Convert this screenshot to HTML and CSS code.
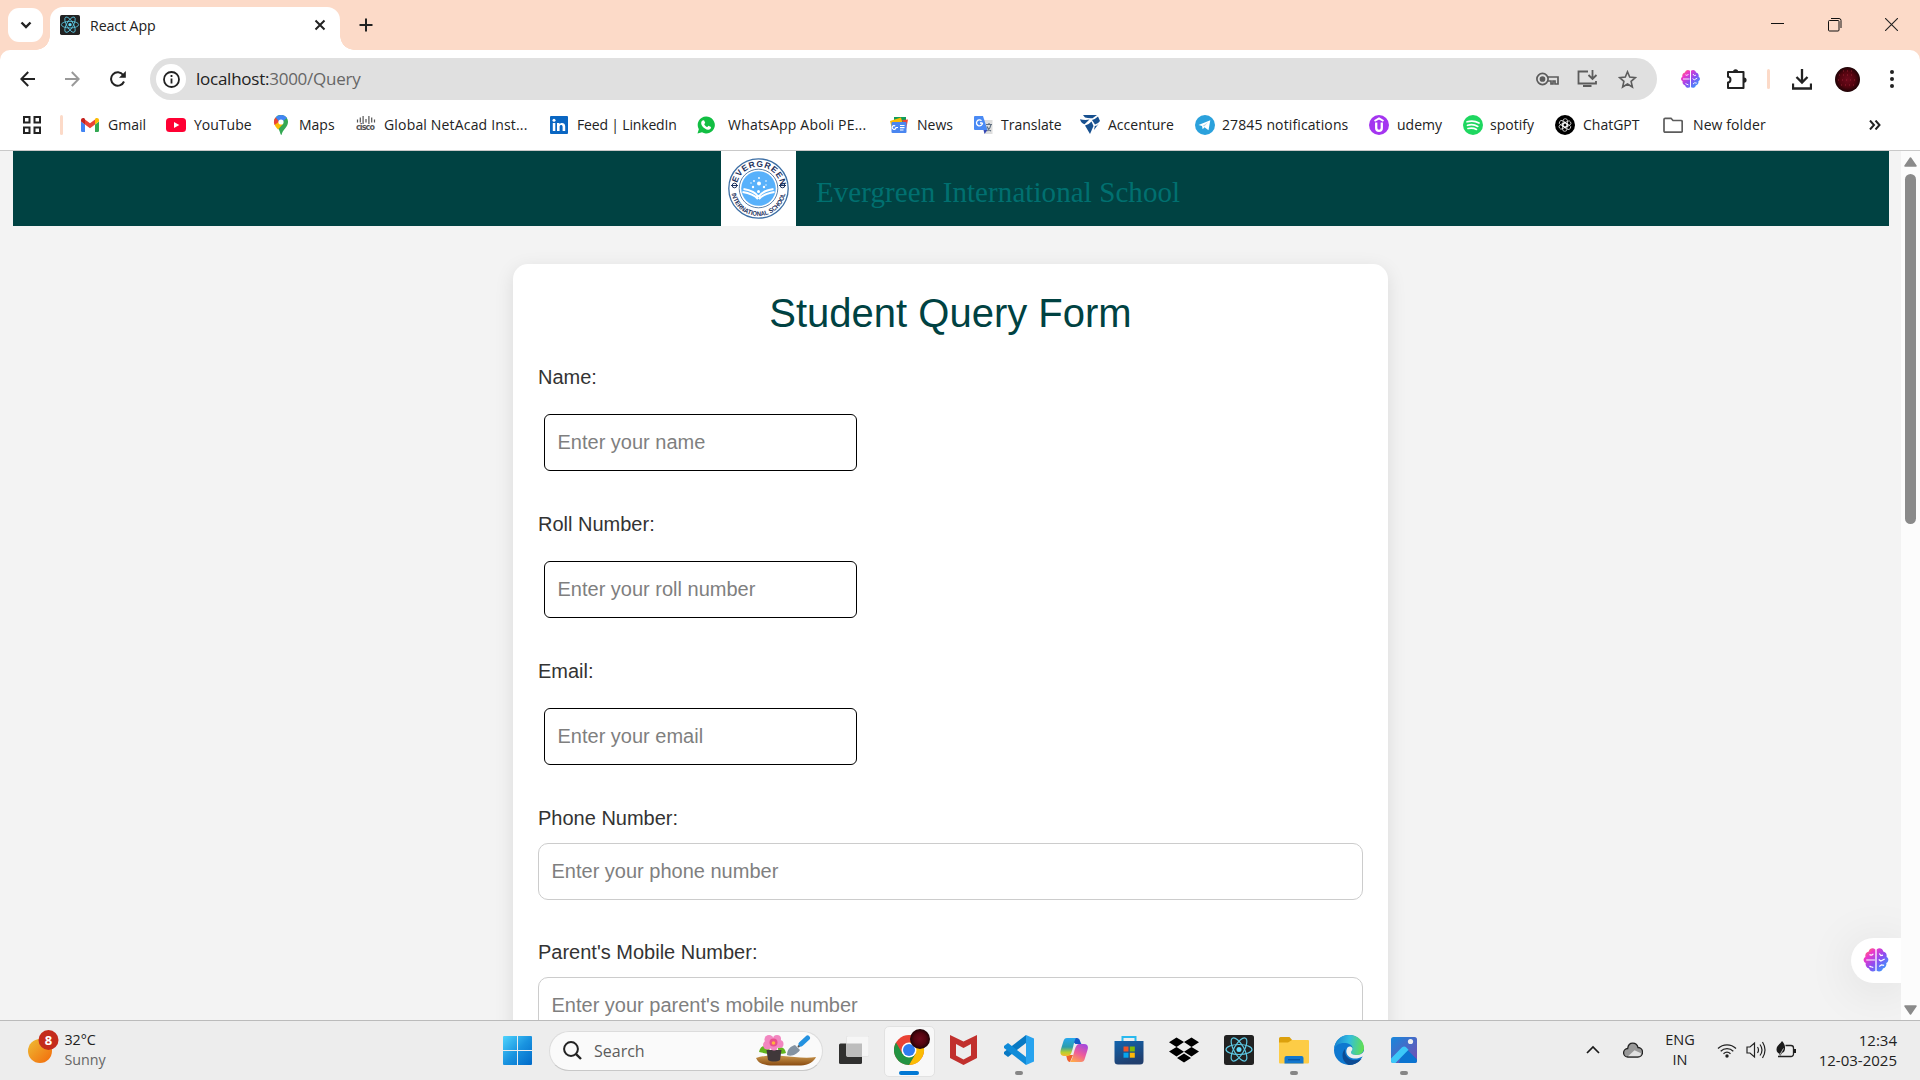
FILE: index.html
```
<!DOCTYPE html>
<html lang="en">
<head>
<meta charset="utf-8">
<title>React App</title>
<link rel="stylesheet" href="styles.css">
</head>
<body>
<svg class="defs" width="0" height="0" aria-hidden="true">
  <defs>
    <linearGradient id="brainGrad" x1="0" y1="0" x2="1" y2="1"><stop offset="0" stop-color="#ff9a2e"/><stop offset=".25" stop-color="#f037c8"/><stop offset=".55" stop-color="#8a4df2"/><stop offset="1" stop-color="#22b2ff"/></linearGradient>
    <linearGradient id="winGrad" x1="0" y1="0" x2="1" y2="1"><stop offset="0" stop-color="#4fd4fd"/><stop offset=".5" stop-color="#1a94e0"/><stop offset="1" stop-color="#0069c8"/></linearGradient>
    <radialGradient id="redBall"><stop offset="0" stop-color="#6d0a1c"/><stop offset=".6" stop-color="#54040f"/><stop offset="1" stop-color="#1e0306"/></radialGradient>
    <symbol id="react" viewBox="0 0 30 30"><rect width="30" height="30" rx="2.5" fill="#222"/><g fill="none" stroke="#5ecbe6" stroke-width="1.2"><ellipse cx="15" cy="14.5" rx="13" ry="5"/><ellipse cx="15" cy="14.5" rx="13" ry="5" transform="rotate(60 15 14.5)"/><ellipse cx="15" cy="14.5" rx="13" ry="5" transform="rotate(120 15 14.5)"/></g><circle cx="15" cy="14.5" r="2.5" fill="#61dafb"/></symbol>
    <symbol id="brain" viewBox="0 0 24 24"><path fill="url(#brainGrad)" d="M11.4 2.2V22c-2.600 1.300-5.200.2-5.800-2.200C3 19.200 2 17 2.500 14.800 0 13.600 0 10.400 2.200 9.300 1.700 6.500 3 4.500 5.300 4.100 6 1.400 9 .3 11.400 2.200zM12.600 2.200V22c2.600 1.300 5.200.2 5.800-2.200 2.600-.6 3.600-2.800 3.100-5 2.500-1.200 2.500-4.400.3-5.500.5-2.800-.8-4.800-3.100-5.200-.7-2.700-3.700-3.800-6.100-1.900z"/><path fill="none" stroke="#fff" stroke-width="1.100" d="M3 12h8M6 7c1 .8 2.500.8 3.500-.8M6 17.500c1 1 2.500.8 3.500 1.500M15 6l1.500 2 2-.5M14.500 11.500l2 1.500 3.500-2M15 18l2-1.500 2.500.5"/></symbol>
  </defs>
</svg>

<header class="tabstrip">
  <button class="tab-search" aria-label="Search tabs"><svg width="12" height="8" viewBox="0 0 12 8"><path d="M1.500 1.500 6 6l4.500-4.500" fill="none" stroke="#222" stroke-width="2.400"/></svg></button>
  <div class="tab">
    <svg width="20" height="20"><use href="#react"/></svg>
    <span class="tab-title">React App</span>
    <svg width="12" height="12" viewBox="0 0 12 12"><path d="M1.500 1.500l9 9m0-9l-9 9" stroke="#222" stroke-width="2"/></svg>
  </div>
  <svg class="new-tab" width="14" height="14" viewBox="0 0 14 14"><path d="M7 .5v13M.5 7h13" stroke="#222" stroke-width="2"/></svg>
  <div class="window-buttons">
    <svg width="13" height="13" viewBox="0 0 13 13"><path d="M0 5.500h13" stroke="#111"/></svg>
    <svg width="14" height="14" viewBox="0 0 14 14"><rect x=".5" y="2.500" width="10.500" height="10.500" rx="1" fill="none" stroke="#111"/><path d="M3 .5h8a2 2 0 0 1 2 2V10" fill="none" stroke="#111"/></svg>
    <svg width="13" height="13" viewBox="0 0 13 13"><path d="M0 0l13 13M13 0L0 13" stroke="#222" stroke-width="1.100"/></svg>
  </div>
</header>

<nav class="toolbar">
  <svg width="15" height="16" viewBox="0 0 15 16"><path d="M15 8H1.500M8.200 1L1.300 8l6.900 7" fill="none" stroke="#222" stroke-width="2"/></svg>
  <svg width="15" height="16" viewBox="0 0 15 16"><path d="M0 8h13.500M6.800 1l6.900 7-6.900 7" fill="none" stroke="#999" stroke-width="2"/></svg>
  <svg width="16" height="16" viewBox="0 0 16 16"><path d="M14 10.500A6.700 6.700 0 1 1 13.200 4L14.500 5.500" fill="none" stroke="#222" stroke-width="2"/><path d="M15.800 0v6.800H9z" fill="#222"/></svg>
  <div class="omnibox">
    <span class="site-info"><svg width="17" height="17" viewBox="0 0 17 17"><circle cx="8.500" cy="8.500" r="7.500" fill="none" stroke="#222" stroke-width="1.800"/><path d="M8.500 7.500v5M8.500 4v2" stroke="#222" stroke-width="1.800"/></svg></span>
    <span class="url">localhost:<i>3000/Query</i></span>
    <div class="omni-icons">
      <svg class="key" width="23" height="14" viewBox="0 0 23 14" fill="none" stroke="#5c5c5c" stroke-width="1.700"><circle cx="6.500" cy="7" r="5.600"/><circle cx="6.500" cy="7" r="2" fill="#5c5c5c"/><path d="M11.500 5H22v7h-3V9h-2v3h-2V9h-3.500"/></svg>
      <svg width="21" height="18" viewBox="0 0 21 18" fill="none" stroke="#5c5c5c" stroke-width="1.800"><path d="M11 1.500H1.500v12h17.500V11M6 16h8.500M15.500 0v8.500M11.500 5l4 4 4-4"/></svg>
      <svg width="19" height="19" viewBox="0 0 19 19"><path d="M9.500 1.800l2.200 5.300 5.700.5-4.300 3.800 1.300 5.600-4.900-3-4.900 3 1.300-5.600L1.600 7.600l5.700-.5z" fill="none" stroke="#5c5c5c" stroke-width="1.600"/></svg>
    </div>
  </div>
  <svg width="21" height="20"><use href="#brain"/></svg>
  <svg width="21" height="21" viewBox="0 0 21 21"><path d="M2 3h15.500v16H2v-5.500c3.300-.5 3.300-5.200 0-5.700z" fill="none" stroke="#222" stroke-width="2" stroke-linejoin="round"/><path d="M7 2.800a2.600 2.600 0 0 1 5.200 0zM18 8.500a2.600 2.600 0 0 1 0 5.200z" fill="#222"/></svg>
  <span class="divider"></span>
  <svg width="20" height="21" viewBox="0 0 20 21"><path d="M1 14.500v5h18v-5M10 0v13M4.500 8l5.500 5.500L15.500 8" fill="none" stroke="#222" stroke-width="2.300"/></svg>
  <svg width="25" height="25" viewBox="0 0 25 25"><circle cx="12.500" cy="12.500" r="12.500" fill="url(#redBall)"/><path d="M4 8h16M3 13h19M6 18h14M8 4h9" stroke="#a8263a" stroke-width=".8" stroke-dasharray="1 3"/></svg>
  <svg width="4" height="18" viewBox="0 0 4 18" fill="#222"><circle cx="2" cy="2" r="2"/><circle cx="2" cy="9" r="2"/><circle cx="2" cy="16" r="2"/></svg>
</nav>

<nav class="bookmarks">
  <svg width="18" height="18" viewBox="0 0 18 18" fill="none" stroke="#222" stroke-width="2"><path d="M1 1h5.500v5.500H1zM11.500 1H17v5.500h-5.500zM1 11.500h5.500V17H1zM11.500 11.500H17V17h-5.500z"/></svg>
  <span class="divider"></span>
  <a class="bm"><svg width="20" height="20" viewBox="0 0 20 20"><path fill="#4285f4" d="M1 6.500l4 3V17H2.200A1.200 1.200 0 0 1 1 15.800z"/><path fill="#34a853" d="M15 9.500l4-3v9.300a1.200 1.200 0 0 1-1.200 1.200H15z"/><path fill="#ea4335" d="M5 4.500l5 3.800 5-3.800v5L10 13.300 5 9.500z"/><path fill="#c5221f" d="M1 5c0-2 2-2.600 3.300-1.700L5 4v5.500l-4-3z"/><path fill="#fbbc04" d="M19 5c0-2-2-2.600-3.300-1.700L15 4v5.500l4-3z"/></svg>Gmail</a>
  <a class="bm"><svg width="20" height="20" viewBox="0 0 20 20"><rect y="3" width="20" height="14" rx="3.500" fill="#ff0033"/><path fill="#fff" d="M8 7l5.300 3L8 13z"/></svg>YouTube</a>
  <a class="bm"><svg width="20" height="20" viewBox="0 0 20 20"><path fill="#34a853" d="M3 7a7 7 0 1 1 13.800 1.500C16 13 12 14 10.500 20 9 20 9.500 16 6.500 12.800z"/><path fill="#fbbc04" d="M3.500 9L8 4l4 5-5 5.500C5 12.500 4 11 3.500 9z"/><path fill="#ea4335" d="M4.500 2.500L9 6l-5.500 4C2.300 7 3 4.500 4.500 2.500z"/><path fill="#4285f4" d="M4.700 2.500C8-1 13.500-.6 16 3L9.500 8z"/><circle cx="10" cy="7" r="2.600" fill="#fff"/></svg>Maps</a>
  <a class="bm netacad"><svg width="20" height="20" viewBox="0 0 20 20"><path d="M1.500 4.500v3M4.300 2.500v5M7.100 1v8M10 4v3.500M12.900 1v8M15.700 2.500v5M18.500 4.500v3" stroke="#555" stroke-width="1.200"/><text x="0" y="15" class="cisco">cisco</text></svg>Global NetAcad Inst...</a>
  <a class="bm linkedin"><svg width="20" height="20" viewBox="0 0 20 20"><rect x="1" y="1" width="18" height="18" rx="1" fill="#0a66c2"/><path fill="#fff" d="M3.800 8h2.500v8H3.800zM8 8h2.500v1.200c1.500-2.200 5.700-1.700 5.700 2V16h-2.600v-4.300c0-2.500-3-2.300-3 0V16H8z"/><circle cx="5" cy="5.200" r="1.500" fill="#fff"/></svg>Feed | LinkedIn</a>
  <a class="bm whatsapp"><svg width="20" height="20" viewBox="0 0 20 20"><path fill="#12be43" d="M10 1.500a8.500 8.500 0 1 1-4 15.800L1.500 18.500 2.800 14.200A8.500 8.500 0 0 1 10 1.500z"/><path fill="#fff" d="M6.500 5.500l1.500-.2 1.200 2.500-1 1.400c.7 1.400 1.700 2.300 3.100 2.900l1.200-1.300 2.500 1.200c.1 2-1.500 2.900-3 2.700C8.200 14 5.300 11 5.200 8.200c0-1.200.5-2.200 1.300-2.700z"/></svg>WhatsApp Aboli PE...</a>
  <a class="bm"><svg width="20" height="20" viewBox="0 0 20 20"><path fill="#0f9d58" d="M5 2h12v7H5z"/><path fill="#ea4335" d="M13 5l6-.5-2 10z"/><path fill="#fbbc04" d="M1 6l11-3.500L14 10 3 14z"/><rect x="2.500" y="7" width="15" height="11" rx="1" fill="#4a86f0"/><path d="M9 12.500H7a1.900 1.900 0 1 1-.8-1.600M11 10.500h4.500M11 12.700h4.500M11 15h3.500" fill="none" stroke="#fff" stroke-width="1.200"/></svg>News</a>
  <a class="bm"><svg width="20" height="20" viewBox="0 0 20 20"><path fill="#dedede" d="M8 5h11.500v14H12z"/><path fill="#4a8af4" d="M2 1h8l4.500 14H2a1 1 0 0 1-1-1V2a1 1 0 0 1 1-1z"/><path fill="#3548b5" d="M10.500 15h4l-3 4z"/><path d="M9.500 8H7m2.500 0a3 3 0 1 1-1-2.300" fill="none" stroke="#fff" stroke-width="1.300"/><path d="M13 9.500h6M16 8v1.500m2 0c-.5 3-2 5-3.500 6.500M14 11.500c.5 1.500 2 3.500 4 4.500" fill="none" stroke="#607080" stroke-width="1.200"/></svg>Translate</a>
  <a class="bm"><svg width="20" height="20" viewBox="0 0 20 20" fill="#17508f"><path d="M3 0h14l-4.500 3.200q-4 .3-7.500-.7zM0 4.200q5 1.300 9.500.3L4.500 9.200Q1 8 0 4.200zM12 5q3.500-1 6-3.500L20 6q-2 3-5 3.500zM5 10.500q4-1 6.500-4L13.500 11 10 19z"/><path d="M14.800 11q2 0 4-2.500L14 15z"/></svg>Accenture</a>
  <a class="bm telegram"><svg width="20" height="20" viewBox="0 0 20 20"><circle cx="10" cy="10" r="10" fill="#2ba1dc"/><path fill="#fff" d="M3.500 10L15.300 5.300l-1.800 10-4-3-1.800 2-.7-3.300z"/><path d="M7.500 11l5.500-3.800-3.500 4" fill="#b9d8ea"/></svg>27845 notifications</a>
  <a class="bm"><svg width="20" height="20" viewBox="0 0 20 20"><circle cx="10" cy="10" r="10" fill="#a435f0"/><path d="M5.500 6L10 3.500 14.500 6" fill="none" stroke="#fff" stroke-width="2"/><path d="M7.200 7.500v5.500a2.800 2.800 0 0 0 5.600 0V7.500" fill="none" stroke="#fff" stroke-width="2.300"/></svg>udemy</a>
  <a class="bm spotify"><svg width="20" height="20" viewBox="0 0 20 20"><circle cx="10" cy="10" r="10" fill="#1ed760"/><path d="M4 6.800c4-1.200 8.500-.8 12 1.200M4.500 10.300c3.500-1 7.200-.7 10.300 1.100M5 13.500c3-.8 6-.5 8.500.9" fill="none" stroke="#fff" stroke-width="1.700" stroke-linecap="round"/></svg>spotify</a>
  <a class="bm"><svg width="20" height="20" viewBox="0 0 20 20"><circle cx="10" cy="10" r="10" fill="#000"/><g fill="none" stroke="#fff" stroke-width=".7"><rect x="8" y="3.700" width="4.500" height="8.500" rx="2.200"/><rect x="8" y="3.700" width="4.500" height="8.500" rx="2.200" transform="rotate(60 10 10)"/><rect x="8" y="3.700" width="4.500" height="8.500" rx="2.200" transform="rotate(120 10 10)"/><rect x="8" y="3.700" width="4.500" height="8.500" rx="2.200" transform="rotate(180 10 10)"/><rect x="8" y="3.700" width="4.500" height="8.500" rx="2.200" transform="rotate(240 10 10)"/><rect x="8" y="3.700" width="4.500" height="8.500" rx="2.200" transform="rotate(300 10 10)"/></g></svg>ChatGPT</a>
  <a class="bm folder"><svg width="20" height="20" viewBox="0 0 20 20"><path d="M1 4.500q0-1.200 1.200-1.200H8L10 5.500h8q1.200 0 1.200 1.200v9.500q0 1-1.200 1H2.200Q1 17.200 1 16z" fill="none" stroke="#5c5c5c" stroke-width="1.700"/></svg>New folder</a>
  <svg width="12" height="10" viewBox="0 0 12 10"><path d="M1 .5L5 5 1 9.500M6.500.5l4 4.500-4 4.500" fill="none" stroke="#222" stroke-width="2"/></svg>
</nav>

<div class="viewport">
  <main class="page">
    <div class="banner">
      <div class="school-logo">
        <svg width="75" height="75" viewBox="0 0 75 75">
          <defs><path id="arcTop" d="M15.500 35a22.200 22.200 0 0 1 44 0"/><path id="arcBottom" d="M10 37.500a27.500 27.500 0 0 0 55 0"/></defs>
          <circle cx="37.500" cy="37.500" r="29.700" fill="#fff" stroke="#3d6fa5" stroke-width="1.300"/>
          <circle cx="37.500" cy="37.500" r="19.300" fill="#fff" stroke="#35608f" stroke-width=".8"/>
          <circle cx="37.500" cy="37.500" r="17.300" fill="#58b1fb"/>
          <path d="M37 48c-4-4.500-9-6-15.500-7M37.500 46c-3-5-8-7-15-8M38 48c4-4.500 9-6 15.500-7M37.500 46c3-5 8-7 15-8" fill="none" stroke="#fff" stroke-width="2"/>
          <g fill="#fff"><circle cx="38" cy="32.500" r="2"/><circle cx="32" cy="36" r="1.200"/><circle cx="43" cy="36" r="1.200"/><circle cx="37.500" cy="40.500" r="1.500"/><circle cx="33" cy="30" r=".9"/><circle cx="38" cy="27" r=".9"/><circle cx="45" cy="30" r=".8"/><circle cx="30" cy="32" r=".7"/><circle cx="45" cy="34" r=".7"/></g>
          <text class="logo-top"><textPath href="#arcTop" startOffset="3" textLength="60">EVERGREEN</textPath></text>
          <text class="logo-bottom"><textPath href="#arcBottom" startOffset="5" textLength="76" lengthAdjust="spacingAndGlyphs">INTERNATIONAL SCHOOL</textPath></text>
          <g fill="none" stroke="#1c315d"><circle cx="13.500" cy="34.500" r="2.300"/><circle cx="61.500" cy="34.500" r="2.300"/><path d="M10 34.500h7M58 34.500h7"/></g>
        </svg>
      </div>
      <h1>Evergreen International School</h1>
    </div>
    <form class="card">
      <h2>Student Query Form</h2>
      <div class="field"><label for="name">Name:</label><input id="name" class="short" placeholder="Enter your name"></div>
      <div class="field"><label for="roll">Roll Number:</label><input id="roll" class="short" placeholder="Enter your roll number"></div>
      <div class="field"><label for="email">Email:</label><input id="email" class="short" placeholder="Enter your email"></div>
      <div class="field full"><label for="phone">Phone Number:</label><input id="phone" placeholder="Enter your phone number"></div>
      <div class="field full"><label for="parent">Parent's Mobile Number:</label><input id="parent" placeholder="Enter your parent's mobile number"></div>
    </form>
    <div class="assistant"><svg width="26" height="26"><use href="#brain"/></svg></div>
  </main>
  <div class="scrollbar">
    <svg width="13" height="10" viewBox="0 0 13 10"><path d="M6.500 1L12 9H1z" fill="#8a8a8a" stroke="#8a8a8a" stroke-width="1.500" stroke-linejoin="round"/></svg>
    <span class="thumb"></span>
    <svg class="down" width="13" height="10" viewBox="0 0 13 10"><path d="M6.500 9L12 1H1z" fill="#8a8a8a" stroke="#8a8a8a" stroke-width="1.500" stroke-linejoin="round"/></svg>
  </div>
</div>

<footer class="taskbar">
  <div class="weather">
    <svg width="32" height="36" viewBox="0 0 32 36"><defs><linearGradient id="sun" x1="0" y1="0" x2="1" y2="1"><stop offset="0" stop-color="#eebd35"/><stop offset="1" stop-color="#f3690a"/></linearGradient></defs><circle cx="12" cy="22" r="12" fill="url(#sun)"/><circle cx="20.500" cy="11" r="10" fill="#c42b1c"/><text x="20.500" y="16" class="badge">8</text></svg>
    <div class="weather-text"><span>32°C</span><span class="muted">Sunny</span></div>
  </div>
  <div class="start"><svg width="29" height="29" viewBox="0 0 29 29"><path fill="url(#winGrad)" d="M1 0h13v14H0V1a1 1 0 0 1 1-1zM15 0h13a1 1 0 0 1 1 1v13H15zM0 15h14v14H1a1 1 0 0 1-1-1zM15 15h14v13a1 1 0 0 1-1 1H15z"/></svg></div>
  <div class="search">
    <svg width="19" height="19" viewBox="0 0 19 19"><circle cx="8" cy="8" r="6.900" fill="none" stroke="#222" stroke-width="2"/><path d="M12.800 12.800L18 18" stroke="#222" stroke-width="2.400"/></svg>
    <span>Search</span>
    <svg class="garden" width="60" height="31" viewBox="0 0 60 31"><defs><linearGradient id="soil" x1="0" x2="0" y1="0" y2="1"><stop offset="0" stop-color="#c9964c"/><stop offset="1" stop-color="#8a4c12"/></linearGradient></defs><path fill="url(#soil)" d="M0 23c8-3 18-2.500 27-2 10 .5 22 3 33 1-2 5-8 8-15 8.500H14C7 30 2 28 0 23z"/><path fill="#62b51e" d="M3 17c1-6 6-8 11-4l-2 6zM22 13c4-2 7 0 8 5-5 2-8 0-8-5z"/><path fill="#40383a" d="M10.500 15h15L24 25c-3 2-9 2-12 0z"/><g fill="#f286c0"><circle cx="13" cy="4.500" r="4.500"/><circle cx="21" cy="4" r="4"/><circle cx="23.500" cy="9" r="4"/><circle cx="11.500" cy="10" r="4.500"/><circle cx="18" cy="12" r="3.500"/></g><circle cx="17.500" cy="7.500" r="4" fill="#e8508c"/><circle cx="17.500" cy="8" r="1.800" fill="#ffb33d"/><path fill="#8493a2" d="M31 20c0-6 4-9 8-10l5 5c-3 4-8 7-13 5z"/><path d="M42 12l4-4" stroke="#555" stroke-width="2"/><path d="M45 9l6.500-6" stroke="#2492e0" stroke-width="5" stroke-linecap="round"/></svg>
  </div>
  <div class="apps">
    <span class="app"><svg width="30" height="28" viewBox="0 0 30 28"><rect y="7.500" width="23" height="20.500" rx="1.500" fill="#30302f"/><rect x="7.500" width="22.500" height="20.500" rx="1.500" fill="#f6f6f6" stroke="#ddd" stroke-width=".6"/><path d="M7.500 7.500H23v13H7.500z" fill="#bdbdbd"/></svg></span>
    <span class="app active"><svg width="36" height="37" viewBox="0 0 36 37"><circle cx="15" cy="22" r="15" fill="#ea4335"/><path fill="#fbbc04" d="M28 14.500A15 15 0 0 1 15 37l6.500-11.200L15 14.500z"/><path fill="#229342" d="M2 14.500A15 15 0 0 0 15 37l6.500-11.200h-13z"/><circle cx="15" cy="22" r="7.500" fill="#fff"/><circle cx="15" cy="22" r="6" fill="#2f7cf0"/><circle cx="26" cy="11" r="10" fill="url(#redBall)"/></svg></span>
    <span class="app"><svg width="27" height="30" viewBox="0 0 27 30"><path fill="#c1302d" fill-rule="evenodd" d="M0 0l13.500 6.500L27 0v23l-13.500 7L0 23zM6 9v11.500l7.500 4 7.500-4V9l-7.500 4z"/></svg></span>
    <span class="app running"><svg width="30" height="30" viewBox="0 0 30 30"><path fill="#0879c3" d="M22 0v8L4 22 0 19v-2z"/><path fill="#0f8bd8" d="M4 8L0 11v2l22 17v-8z"/><path fill="#27a3ef" d="M22 0l8 3.500v23L22 30z"/></svg></span>
    <span class="app"><svg width="28" height="26" viewBox="0 0 28 26"><defs><linearGradient id="copA" x1="0" x2="0" y1="0" y2="1"><stop offset="0" stop-color="#27a8ef"/><stop offset=".5" stop-color="#2c9dac"/><stop offset=".8" stop-color="#b9d02c"/><stop offset="1" stop-color="#f8b72f"/></linearGradient><linearGradient id="copB" x1=".7" x2=".2" y1="0" y2="1"><stop offset="0" stop-color="#a749db"/><stop offset=".5" stop-color="#ee5c9b"/><stop offset="1" stop-color="#ffaa4a"/></linearGradient></defs><path fill="#1558c8" d="M9 1h8c3 0 3 4 4.500 6h-6z"/><path fill="#f0602c" d="M6 18h7l-3 7c-3 0-3-4-4-7z"/><path fill="url(#copA)" d="M7 1h9c-3 4-3 18-8 18H4c-4 0-4-4-3-7L3.500 4C4.200 2 5 1 7 1z"/><path fill="url(#copB)" d="M19 7h5c4 0 4.500 3 3.500 6L25 21c-.7 3-2 4-4 4H10c4-3 4-18 9-18z"/></svg></span>
    <span class="app"><svg width="30" height="30" viewBox="0 0 30 30"><defs><linearGradient id="store" x1="0" x2=".4" y1="0" y2="1"><stop offset="0" stop-color="#1264ae"/><stop offset="1" stop-color="#213f6e"/></linearGradient></defs><path d="M8.500 7V2h13v5" fill="none" stroke="#29b9ee" stroke-width="2"/><path fill="url(#store)" d="M.5 6h29v20a3.500 3.500 0 0 1-3.500 3.500H4A3.500 3.500 0 0 1 .5 26z"/><path fill="#f05427" d="M9.500 11.500h5v5h-5z"/><path fill="#81bb06" d="M15.800 11.500h5v5h-5z"/><path fill="#06a5ee" d="M9.500 17.700h5v5h-5z"/><path fill="#ffb808" d="M15.800 17.700h5v5h-5z"/></svg></span>
    <span class="app"><svg width="30" height="26" viewBox="0 0 30 26"><path d="M7.500.5L15 5l-7.500 5L0 5.200zM22.500.5L30 5.200 22.500 10 15 5zM0 14.500L7.500 10l7.500 4.800-7.500 4.700zM22.500 10l7.500 4.500-7.500 5-7.500-4.700zM15 16.500l7 4.500-7 4.500L8 21z"/></svg></span>
    <span class="app"><svg width="30" height="30"><use href="#react"/></svg></span>
    <span class="app running"><svg width="30" height="27" viewBox="0 0 30 27"><path fill="#dca00d" d="M1.500 0h9l3 3.500V9H0V1.500A1.500 1.500 0 0 1 1.500 0z"/><path fill="#fdcc46" d="M0 5.500h9L13 3h16q1 0 1 1v21.500q0 1-1 1H1q-1 0-1-1z"/><path fill="#1377cd" d="M5.500 26.500V21a2 2 0 0 1 2-2h15a2 2 0 0 1 2 2v5.500z"/><path d="M9 22.800h12" stroke="#064b93"/></svg></span>
    <span class="app"><svg width="30" height="30" viewBox="0 0 30 30"><defs><linearGradient id="edge" x1="0" y1=".2" x2="1" y2=".3"><stop offset="0" stop-color="#167fd0"/><stop offset=".5" stop-color="#32bde0"/><stop offset="1" stop-color="#61df53"/></linearGradient></defs><circle cx="15" cy="15" r="15" fill="#0e78d0"/><path fill="url(#edge)" d="M0 14C1 5 7 0 15 0c9 0 15 6 15 13 0 4-3 7-7 7s-6-1-6-2.500 1.500-2 1.500-4.500c0-3-4-5-8.500-5C5 8 2 10 0 14z"/><path fill="#0c4b94" d="M11 14c-1 8 5 12 12 11l4.500-1C24 28 20 30 15 30c-6-2-9-11-4-16z"/><path fill="#ededed" d="M13.500 12.500c-2 3-1.500 7 2 9.500 4 2.500 9 1.800 13-.5l1.500 1V16c-1.500 3-5 4.500-8 4-3 0-5-1-5-2.500s1.500-2 1.500-4c-1-2.500-3.500-2.500-5-1z"/></svg></span>
    <span class="app running"><svg width="26" height="26" viewBox="0 0 26 26"><defs><linearGradient id="photo" x1="0" x2="1" y1="0" y2="1"><stop offset="0" stop-color="#1688dc"/><stop offset="1" stop-color="#7a4bb0"/></linearGradient></defs><rect width="26" height="26" rx="2.500" fill="url(#photo)"/><path fill="#0b74d0" d="M13 9.500l13 13V24a2 2 0 0 1-2 2H8z"/><path fill="#3cc8f8" d="M10.800 10.500q2.500-2 4.500 0l2.200 2.300L4.500 26H2.300A2 2 0 0 1 0 24v-2.500z"/><circle cx="19.500" cy="4.500" r="2.600" fill="#eee"/></svg></span>
  </div>
  <div class="tray">
    <svg width="14" height="9" viewBox="0 0 14 9"><path d="M1 8l6-6 6 6" fill="none" stroke="#1a1a1a" stroke-width="1.700"/></svg>
    <svg width="20" height="16" viewBox="0 0 20 16"><path d="M5 15a4.200 4.200 0 0 1-.3-8.500C5 3.500 7 1.200 9.800 1.200s4.600 1.800 5.200 4.300A4.700 4.700 0 0 1 14.600 15z" fill="#999" stroke="#222" stroke-width="1.300"/><path d="M5 14.200l6.500-6 6.500 3q0 3-3.400 3z" fill="#e2e2e2"/></svg>
    <div class="lang"><span>ENG</span><span>IN</span></div>
    <svg width="20" height="16" viewBox="0 0 20 16"><path d="M1 6.500a13 13 0 0 1 18 0M3.700 9.200a9.200 9.200 0 0 1 12.600 0M6.500 11.700a5.300 5.300 0 0 1 7 0" fill="none" stroke="#222" stroke-width="1.300"/><circle cx="10" cy="14" r="1.700" fill="#222"/></svg>
    <svg width="21" height="18" viewBox="0 0 21 18"><path d="M1 6h3l4.500-4v14L4 12H1zM11.500 6q2 3 0 6M14 3.500q4 5.500 0 11M16.500 1q5 8 0 16" fill="none" stroke="#222" stroke-width="1.200"/></svg>
    <svg width="20" height="18" viewBox="0 0 20 18"><path d="M9.500 4.500H15A2.500 2.500 0 0 1 17.500 7v6A2.500 2.500 0 0 1 15 15.500H2" fill="none" stroke="#222" stroke-width="1.300"/><path d="M17.500 8H20v4h-2.500zM6 0C5 2.500.5 4 .5 8.500c0 2.500 1.500 3.800 3 4L3 14.500h1.500L6 12c2.500-1 3.200-3 3-6C8.900 3.500 7.500 1.500 6 0z" fill="#1b1b1b"/><path d="M3.500 14.500l4-7" stroke="#ededed" stroke-width=".8"/></svg>
    <div class="clock"><span>12:34</span><span>12-03-2025</span></div>
  </div>
</footer>
</body>
</html>
```
FILE: styles.css
```
* { box-sizing: border-box; }
body { margin: 0; width: 1920px; height: 1080px; overflow: hidden; display: flex; flex-direction: column; background: #fcdac8; font-family: "Open Sans", "Noto Sans", sans-serif; font-size: 14px; color: #222; }
svg { display: block; flex: none; }
.defs { position: absolute; }

/* Browser frame */
.tabstrip { flex: none; height: 50px; display: flex; align-items: flex-start; background: #fcdac8; }
.tab-search { margin: 8px 0 0 8px; width: 35px; height: 34px; border: 0; border-radius: 11px; background: #fff; display: flex; align-items: center; justify-content: center; padding: 0; }
.tab { position: relative; margin: 7px 0 0 7px; width: 290px; height: 43px; padding: 0 14px 7px 10px; border-radius: 13px 13px 0 0; background: #fff; display: flex; align-items: center; gap: 10px; }
.tab::before, .tab::after { content: ""; position: absolute; bottom: 0; width: 14px; height: 14px; }
.tab::before { left: -14px; background: radial-gradient(circle at 0 0, transparent 13.500px, #fff 14px); }
.tab::after { right: -14px; background: radial-gradient(circle at 100% 0, transparent 13.500px, #fff 14px); }
.tab-title { flex: 1; font-size: 14.200px; letter-spacing: -.1px; }
.new-tab { margin: 18px 0 0 19px; }
.window-buttons { margin: 18px 22px 0 auto; display: flex; gap: 43.500px; }
.toolbar { flex: none; height: 50px; padding-top: 8px; display: grid; grid-template-columns: 45px 45px 40px 1530px 46px 41px 25px 43px 55px 4px; padding-left: 20px; align-items: center; background: #fff; border-radius: 10px 10px 0 0; }
.omnibox { width: 1507px; height: 42px; border-radius: 21px; background: #e0e0e0; display: flex; align-items: center; padding: 0 20px 0 6px; }
.site-info { width: 30px; height: 30px; border-radius: 50%; background: #fff; display: flex; align-items: center; justify-content: center; }
.url { margin-left: 10px; font-size: 17px; line-height: 24px; letter-spacing: -.25px; }
.url i { font-style: normal; color: #666; }
.omni-icons { margin-left: auto; display: flex; align-items: center; gap: 20px; }
.key { margin-right: -2px; }
.divider { width: 3px; height: 20px; border-radius: 2px; background: #fcdac8; }
.bookmarks { flex: none; height: 51px; padding-left: 23px; background: #fff; border-bottom: 1px solid #c9c9c9; display: grid; align-items: center; grid-template-columns: 37px 20px 86px 105px 85px 193px 147px 193px 84px 107px 115px 174px 94px 92px 108px 206px 12px; }
.bm { display: flex; align-items: center; gap: 8px; white-space: nowrap; font-size: 14px; line-height: 20px; }
.netacad { letter-spacing: .17px; }
.linkedin { letter-spacing: -.17px; }
.whatsapp { gap: 12px; letter-spacing: .2px; }
.telegram { gap: 7px; letter-spacing: .12px; }
.spotify { gap: 7px; }
.folder { gap: 10px; letter-spacing: .1px; }
.cisco { font: bold 8px "DejaVu Sans", sans-serif; fill: #555; letter-spacing: -.9px; }

/* Web page */
.viewport { flex: none; height: 869px; display: flex; }
.page { position: relative; width: 1901px; padding: 0 12px 0 13px; overflow: hidden; background: #f3f3f3; font-family: "Liberation Sans", Arial, sans-serif; }
.banner { height: 75px; padding-left: 708px; display: flex; background: #004242; }
.school-logo { width: 75px; height: 75px; background: #fff; }
.logo-top, .logo-bottom { font-family: "Liberation Sans", sans-serif; font-weight: bold; fill: #1c315d; }
.logo-top { font-size: 8.500px; }
.logo-bottom { font-size: 6.500px; }
.banner h1 { margin: 24px 0 0 20px; font: 29px/34px "Liberation Serif", serif; letter-spacing: .08px; color: #007070; white-space: nowrap; }
.card { width: 875px; height: 1100px; margin: 38px 0 0 500px; padding: 25px; border-radius: 15px; background: #fff; box-shadow: 0 5px 19px rgba(0, 0, 0, .1); }
.card h2 { margin: 0 0 25px; text-align: center; font-size: 40px; line-height: 48px; font-weight: 400; color: #004242; }
.field { display: flex; flex-direction: column; margin-bottom: 38px; }
.field.full { margin-bottom: 37px; }
.field label { font-size: 20px; line-height: 30px; margin-bottom: 10px; color: #333; }
.field input { width: 825px; height: 57px; margin: 0; padding: 0 12.500px; border: 1px solid #ccc; border-radius: 10px; font: 20px "Liberation Sans", Arial, sans-serif; background: #fff; outline: 0; }
.field input.short { width: 313px; margin: 12px 0 0 6px; border-color: #000; border-radius: 6px; }
.field input::placeholder { color: #7f7f7f; opacity: 1; }
.assistant { position: absolute; right: 0; top: 789px; width: 50px; height: 48px; padding-left: 12px; padding-bottom: 1px; border-radius: 24px 0 0 24px; background: #fff; display: flex; align-items: center; box-shadow: 0 6px 50px rgba(0, 0, 0, .1); }
.assistant { top: 787px; height: 45px; }
.scrollbar { width: 19px; padding: 6px 0 5px; background: #fcfcfc; display: flex; flex-direction: column; align-items: center; }
.thumb { width: 11px; height: 350px; margin-top: 7px; border-radius: 6px; background: #8a8a8a; }
.down { margin-top: auto; }

/* Taskbar */
.taskbar { flex: none; height: 60px; display: flex; align-items: center; background: #ededed; border-top: 1px solid #bbb; }
.weather { width: 503px; padding-left: 28px; display: flex; align-items: center; gap: 4.500px; }
.weather svg { margin-top: -7px; }
.weather-text { display: flex; flex-direction: column; line-height: 20px; margin-top: -2px; font-size: 14.300px; letter-spacing: -.05px; }
.muted { color: #666; }
.badge { font: bold 13px "Open Sans", sans-serif; fill: #fff; text-anchor: middle; }
.start { width: 46px; }
.search { width: 274px; height: 40px; padding: 0 6px 0 13px; border: 1px solid #dcdcdc; border-bottom-color: #c8c8c8; border-radius: 20px; background: #fafafa; display: flex; align-items: center; font-size: 16px; color: #5c5c5c; }
.search span { margin-left: 12px; }
.garden { margin-left: auto; }
.apps { display: flex; margin-left: 3px; }
.app { position: relative; width: 55.100px; height: 59px; display: flex; align-items: center; justify-content: center; }
.app > svg { margin-bottom: 1px; }
.app.active::before { content: ""; position: absolute; left: 3px; top: 5px; width: 49px; height: 49px; border-radius: 5px; background: #f8f8f8; border: 1px solid #e2e2e2; }
.app.active svg { position: relative; left: 3px; top: -4px; }
.app.active::after, .app.running::after { content: ""; position: absolute; bottom: 5px; width: 8px; height: 4px; border-radius: 2px; background: #868686; }
.app.active::after { width: 20px; background: #0078d4; }
.tray { margin-left: auto; margin-right: 23px; display: flex; align-items: center; margin-top: -2px; }
.tray > svg:nth-of-type(2) { margin-left: 23px; }
.lang { display: flex; flex-direction: column; align-items: center; width: 74px; line-height: 20px; font-size: 14.500px; }
.tray > svg:nth-of-type(4), .tray > svg:nth-of-type(5) { margin-left: 9px; }
.clock { width: 101px; display: flex; flex-direction: column; align-items: flex-end; font-size: 15px; line-height: 20px; white-space: nowrap; }
```
